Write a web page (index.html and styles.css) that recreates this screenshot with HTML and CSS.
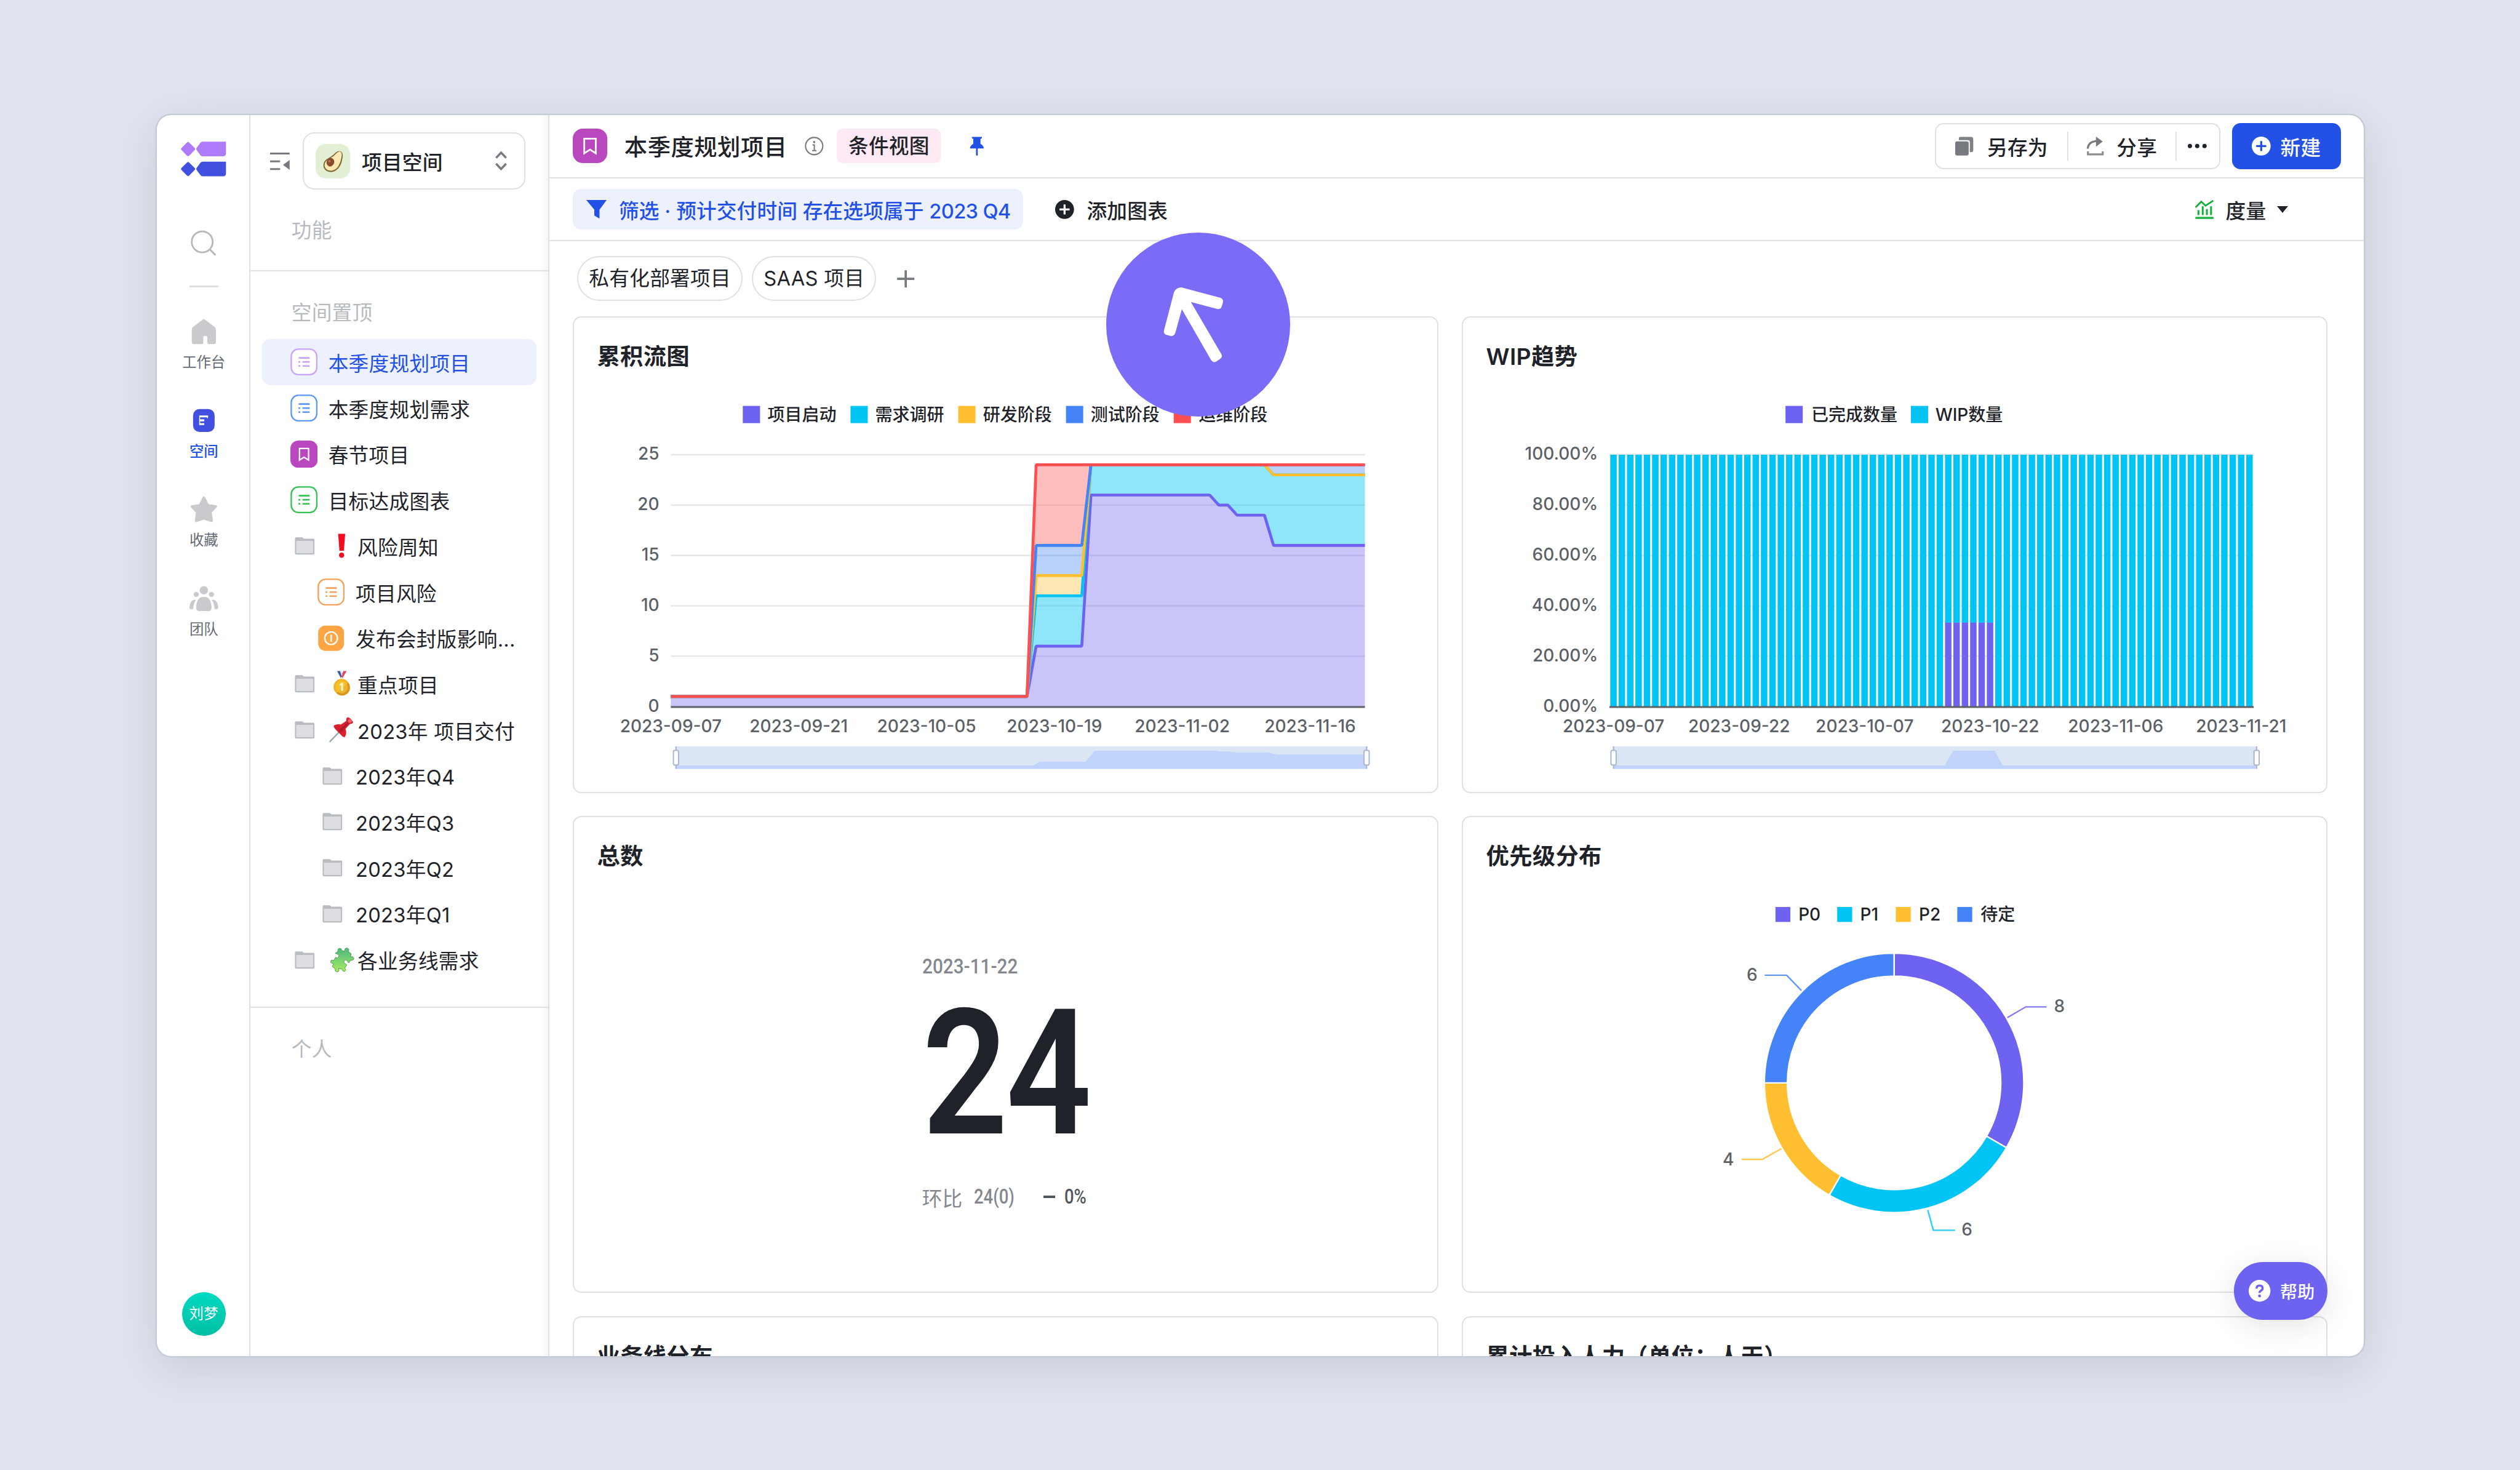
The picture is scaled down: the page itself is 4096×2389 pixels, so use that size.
FILE: index.html
```html
<!DOCTYPE html>
<html lang="zh-CN">
<head>
    <meta charset="UTF-8">
    <meta name="viewport" content="width=device-width, initial-scale=1.0">
    <title>本季度规划项目</title>
    <link rel="stylesheet" href="styles.css">
</head>
<body>
    <!-- 图标 -->
    <svg class="defs">
        <symbol id="i-list" viewBox="0 0 19 19">
            <rect x=".6" y=".6" width="17.8" height="17.8" rx="5" fill="#fff" stroke="currentColor" stroke-width="1"/>
            <path d="M5.8 6.7h7.6M8.4 9.5h5M8.4 12.3h5" stroke="currentColor" stroke-width="1.1"/>
            <path d="M5.6 9.5h1.3M5.6 12.3h1.3" stroke="currentColor" stroke-width="1.1"/>
        </symbol>
        <symbol id="i-folder" viewBox="0 0 15 13">
            <path d="M.6 1.2Q.6.5 1.3.5h4.3l1.2 1h6.6q.8 0 .8.8v9.4q0 .8-.8.8H1.4q-.8 0-.8-.8z" fill="#b9bdc2"/>
            <path d="M1.5 3h11.8v8.6H1.5z" fill="#dcdee2"/>
        </symbol>
        <symbol id="i-mark" viewBox="0 0 24 24">
            <rect width="24" height="24" rx="7" fill="#b947be"/>
            <path d="M8 7h8v10.2l-4-2.6-4 2.6z" fill="none" stroke="#fff" stroke-width="1.2"/>
        </symbol>
        <symbol id="i-plus" viewBox="0 0 14 14">
            <path fill-rule="evenodd" d="M7 .4a6.6 6.6 0 1 0 0 13.2A6.6 6.6 0 0 0 7 .4zM6.3 3.5h1.4v2.8h2.8v1.4H7.7v2.8H6.3V7.7H3.5V6.3h2.8z" fill="currentColor"/>
        </symbol>
    </svg>

    <div class="window">
        <nav class="rail">
            <svg class="logo" viewBox="0 0 32 24.4">
                <g>
                    <path d="M4.2.8q.8-.9 1.6 0l3.8 3.7q.7.7 0 1.400L5.900 9.700q-.9.900-1.800 0L.4 5.900q-.6-.7 0-1.400z"/>
                    <path d="M15.2.1H31.4v8.200q0 2-2 2H15.200q-1 0-1.600-.8l-2.600-3.500q-.6-.8 0-1.600L13.600.9q.6-.8 1.600-.8z"/>
                </g>
                <g fill="#4150de" transform="translate(0 13.9)">
                    <path d="M4.2.8q.8-.9 1.6 0l3.8 3.7q.7.7 0 1.400L5.900 9.700q-.9.900-1.800 0L.4 5.900q-.6-.7 0-1.400z"/>
                    <path d="M15.2.1H31.4v8.200q0 2-2 2H15.200q-1 0-1.600-.8l-2.600-3.500q-.6-.8 0-1.600L13.600.9q.6-.8 1.600-.8z"/>
                </g>
            </svg>
            <svg class="search" viewBox="0 0 18 18">
                <circle cx="8" cy="8.2" r="7.3" fill="none" stroke="#b4b8bd" stroke-width="1.2"/>
                <path d="M13.4 13.5l3.900 3.900" stroke="#b4b8bd" stroke-width="1.3"/>
            </svg>
            <div class="rail-line"></div>
            <a class="rail-item">
                <svg viewBox="0 0 20 20"><path d="M9 1.600q1-.8 2 0l6.600 5q.8.700.8 1.700v8.800q0 1.400-1.400 1.400h-3.600q-1 0-1-1v-3.600q0-1-1.100-1h-.6q-1.100 0-1.100 1v3.600q0 1-1 1H3q-1.400 0-1.400-1.400V8.300q0-1 .8-1.700z" fill="#c8cacd"/></svg>
                <span>工作台</span>
            </a>
            <a class="rail-item active">
                <svg viewBox="0 0 20 20">
                    <rect x="2.5" y="2" width="15" height="16" rx="4.5" fill="#4150de"/>
                    <path d="M6.8 7.2h6.200M6.8 9.9h3.500M6.8 12.5h3.500" stroke="#fff" stroke-width="1.3"/>
                    <path d="M7.1 7v6M12.5 7v1.400" stroke="#fff" stroke-width=".6"/>
                </svg>
                <span>空间</span>
            </a>
            <a class="rail-item">
                <svg viewBox="0 0 20 20"><path d="M9 1.600q1-1.600 2 0l2.300 4.600 5 .7q1.600.400.5 1.700l-3.300 3.400.8 5.200q0 1.900-1.700 1.200L10 16.900l-4.600 1.500q-1.700.700-1.700-1.200l.8-5.200-3.300-3.400q-1.100-1.300.5-1.700l5-.7z" fill="#c8cacd"/></svg>
                <span>收藏</span>
            </a>
            <a class="rail-item">
                <svg viewBox="0 0 20 20" fill="#c8cacd">
                    <circle cx="10" cy="4" r="2.9"/>
                    <circle cx="4.7" cy="6.9" r="1.8"/>
                    <circle cx="15.3" cy="6.9" r="1.8"/>
                    <path d="M4.700 16.200q0-7.600 5.300-7.600t5.300 7.600q0 2.200-1.800 2.200h-7q-1.800 0-1.800-2.200z"/>
                    <path d="M4.600 10.600q-1.900 2.500-2 6.300-2.600.7-2.600-.9.200-4.400 2.800-5.300zM15.400 10.600q1.900 2.500 2 6.300 2.600.7 2.600-.9-.2-4.400-2.800-5.300z"/>
                </svg>
                <span>团队</span>
            </a>
            <div class="avatar">刘梦</div>
        </nav>

        <aside class="sidebar">
            <div class="space-row">
                <svg class="fold" viewBox="0 0 14 13"><path d="M0 1.100h13.600M0 6.500h7M0 11.900h7" stroke="#777b80" stroke-width="1.3"/><path d="M13.600 5.600v6.800L9 9z" fill="#777b80"/></svg>
                <div class="space-select">
                    <div class="space-icon">
                        <svg viewBox="0 0 24 24">
                            <path d="M17.6 5.2c1.9 1.2 1.3 3.4.8 6-.7 3.9-3.2 7.6-6.7 8.2-3.6.6-6.8-1.9-6.2-5.3.5-3.4 4-4.2 6.6-6.4C14 6 15.7 4.1 17.6 5.2z" fill="#7a6432"/>
                            <path d="M17.3 5.5c1.4.9.9 3 .3 5.5-.9 3.7-3 7-6.2 7.5-3 .5-5.6-1.6-5.1-4.4.5-2.9 3.7-3.7 6.4-5.9 1.7-1.4 3.2-3.6 4.6-2.7z" fill="#fae9b2"/>
                            <path d="M6.3 14.8c.4 2.6 2.7 4.2 5.3 3.6 2.3-.5 4-2.7 5-5.3.1 3-3.1 5.6-5.8 5.5-2.5 0-4.4-1.6-4.5-3.8z" fill="#e9c66f"/>
                            <ellipse cx="10.3" cy="12.7" rx="2.6" ry="3" transform="rotate(25 10.3 12.7)" fill="#8a4b2c"/>
                            <circle cx="9.7" cy="12" r=".9" fill="#b8764f"/>
                        </svg>
                    </div>
                    <span>项目空间</span>
                    <svg class="updown" viewBox="0 0 9 14"><path d="M1 5l3.5-3.7L8 5M1 9l3.5 3.7L8 9" fill="none" stroke="#777b80" stroke-width="1.5"/></svg>
                </div>
            </div>
            <div class="group-title first">功能</div>
            <div class="group-title">空间置顶</div>
            <ul class="tree">
                <li class="selected"><svg class="ic" color="#c9a2fb"><use href="#i-list"/></svg>本季度规划项目</li>
                <li><svg class="ic" color="#5b98fb"><use href="#i-list"/></svg>本季度规划需求</li>
                <li><svg class="ic"><use href="#i-mark"/></svg>春节项目</li>
                <li><svg class="ic" color="#30c552"><use href="#i-list"/></svg>目标达成图表</li>
                <li><svg class="ic folder"><use href="#i-folder"/></svg><svg class="emoji" viewBox="0 0 18 18"><path d="M6.700.6h4.900l-.9 11.800H7.600z" fill="#f20d20"/><circle cx="9.1" cy="15.5" r="1.8" fill="#f20d20"/></svg>风险周知</li>
                <li class="sub"><svg class="ic" color="#f3a25a"><use href="#i-list"/></svg>项目风险</li>
                <li class="sub"><svg class="ic" viewBox="0 0 19 19"><rect x=".5" y=".7" width="18" height="17.6" rx="5" fill="#ffa544"/><circle cx="9.5" cy="9.5" r="4.4" fill="none" stroke="#fff"/><path d="M9.500 7v5" stroke="#fff" stroke-width="1.1"/></svg>发布会封版影响...</li>
                <li><svg class="ic folder"><use href="#i-folder"/></svg><svg class="emoji" viewBox="0 0 18 18">
                    <path d="M6 .2h2l1.500 3.500L8.500 5z" fill="#3c55a8"/><path d="M10.400.2h2.200L9.800 5 8.600 4z" fill="#e0485c"/><path d="M8 .2h.9l.8 2.600-.6.8z" fill="#d7dcea"/>
                    <circle cx="9.1" cy="11.3" r="5.600" fill="#f0b21f"/><path d="M13.800 8.400a5.500 5.500 0 0 1-8.300 7.200z" fill="#dc9620"/>
                    <circle cx="9.1" cy="11.3" r="4.4" fill="#f8c934" fill-opacity=".6"/><path d="M7.600 9.600l1.600-1.200h.9v5.600H8.800v-4.100l-1 .6z" fill="#fff6cf"/></svg>重点项目</li>
                <li><svg class="ic folder"><use href="#i-folder"/></svg><svg class="emoji" viewBox="0 0 18 18">
                    <path d="M.8 17.400l7-7.300" stroke="#9aa8b4" stroke-width="1"/>
                    <path d="M3.700 6q2.500-1.300 4.900-.6l3.800-2.600q-.5-2.300 1.200-2.500 1.500.3 3.300 3 .6 1.500-1.900 1.600l-3.200 3.500q1.200 3-.5 5.700-1.400.2-2.500-1.400L4.900 8.800Q3.300 7 3.700 6z" fill="#d8202f"/>
                    <path d="M7 9.400l6.200-5.600 1 .8-5.600 6.400z" fill="#8f1a25" fill-opacity=".55"/><circle cx="14.9" cy="2.8" r="1.3" fill="#f2606a"/></svg>2023年 项目交付</li>
                <li class="sub"><svg class="ic folder"><use href="#i-folder"/></svg>2023年Q4</li>
                <li class="sub"><svg class="ic folder"><use href="#i-folder"/></svg>2023年Q3</li>
                <li class="sub"><svg class="ic folder"><use href="#i-folder"/></svg>2023年Q2</li>
                <li class="sub"><svg class="ic folder"><use href="#i-folder"/></svg>2023年Q1</li>
                <li><svg class="ic folder"><use href="#i-folder"/></svg><svg class="emoji" viewBox="0 0 18 18">
                    <defs><linearGradient id="pz" x1="0" y1="0" x2="0" y2="1"><stop offset="0" stop-color="#4cb883"/><stop offset="1" stop-color="#a8ec62"/></linearGradient></defs>
                    <path d="M6.600 2.400q-.5-1.900 1.200-2 1.500 0 1.300 1.400l2.200.6q-.3-2.200 1.500-2.200 2 .2 1 2.400l2 1.500-.5 2.200q2-.6 2.300.9 0 1.800-2.400 1.400l-.9 1.800q-.9-.1-1.200-1.300-1.400-1.300-2.300 0-.6 1.400.9 2l1 .7-1.400 2.300q1.300 1.600 0 2.200-1.700.4-1.900-1.600l-2.600-.3q1 2-.4 2.200-2.200.2-1.700-2l-2-1.500.8-2.200q-2.200 0-2-1.500.4-1.400 2.200-.6l1.200-2.200q1.300 1 2.100-.2.600-1.500-1-2.100l-1.300-.5z" transform="translate(0 .6)" fill="url(#pz)" stroke="#4b9a3c" stroke-width=".4"/></svg>各业务线需求</li>
            </ul>
            <div class="group-title person">个人</div>
        </aside>

        <main class="main">
            <header class="topbar">
                <svg class="badge"><use href="#i-mark"/></svg>
                <h1>本季度规划项目</h1>
                <svg class="info" viewBox="0 0 14 14"><circle cx="7" cy="7" r="6" fill="none" stroke="#777b80" stroke-width=".9"/><circle cx="7" cy="4.2" r=".8" fill="#777b80"/><path d="M5.800 6.200H7.100v4M5.600 10.200h3" fill="none" stroke="#777b80" stroke-width=".9"/></svg>
                <span class="tag">条件视图</span>
                <svg class="pin" viewBox="0 0 11 14"><path d="M2 .6h7v.9L8 2v3.500q2.300 1.300 2.300 3.200H.7Q.7 6.800 3 5.500V2L2 1.500z" fill="#2351e6"/><path d="M5.500 8v5.600" stroke="#2351e6" stroke-width="1.2"/></svg>
                <div class="actions">
                    <div class="btn-group">
                        <a class="btn save"><svg viewBox="0 0 14 14"><path d="M3.800.6h7.700q1.500 0 1.500 1.500v7.600q0 1.500-1.500 1.500h-.9V4.300q0-1.400-1.400-1.400H3V1.400q0-.8.8-.8z" fill="#7e8287"/><rect x=".4" y="3.7" width="9.4" height="9.9" rx="1.3" fill="#777b80"/></svg>另存为</a>
                        <a class="btn share"><svg viewBox="0 0 14 14"><path d="M1.400 8.800q.6-5 6.600-5.300" fill="none" stroke="#777b80" stroke-width="1.4"/><path d="M7.200.4l4.700 3.500-4.700 3.600z" fill="#777b80"/><path d="M1.600 10.700v2.100h10.300v-2.100" fill="none" stroke="#8b8f93" stroke-width="1.4"/></svg>分享</a>
                        <a class="btn more"><svg viewBox="0 0 14 14" fill="#1f2329"><circle cx="1.9" cy="7" r="1.5"/><circle cx="7" cy="7" r="1.5"/><circle cx="12.1" cy="7" r="1.5"/></svg></a>
                    </div>
                    <a class="btn-new"><svg><use href="#i-plus"/></svg>新建</a>
                </div>
            </header>

            <div class="toolbar">
                <div class="filter"><svg viewBox="0 0 15 14"><path d="M.4.4h14.200L9.600 7.200v6.200L6 11.200v-4z" fill="#2351e6"/></svg><span>筛选 · 预计交付时间 存在选项属于 <span class="latin">2023 Q4</span></span></div>
                <div class="add-chart"><svg><use href="#i-plus"/></svg>添加图表</div>
                <div class="measure">
                    <svg viewBox="0 0 14 14" fill="none" stroke="#14b038"><path d="M.7 5.600l4-4 3 2.800L13 .9" stroke-width="1.2"/><path d="M2.700 10.900V7.500M5.700 10.900V4.800M8.600 10.900V6.700M11.500 10.900V4.800" stroke-width="1.3"/><path d="M.6 12.900h12.600" stroke-width="1.4"/></svg>
                    <span>度量</span><i class="caret"></i>
                </div>
            </div>

            <div class="content">
                <div class="chips">
                    <span class="chip">私有化部署项目</span>
                    <span class="chip">SAAS 项目</span>
                    <svg class="chip-add" viewBox="0 0 13 13"><path d="M6.500.5v12M.5 6.500h12" stroke="#777b80" stroke-width="1.6"/></svg>
                </div>
                <div class="cards">
                    <section class="card">
                        <h2>累积流图</h2>
                        <svg class="chart" id="flow" viewBox="290.5 196 600.5 275"></svg>
                    </section>
                    <section class="card">
                        <h2>WIP趋势</h2>
                        <svg class="chart" id="wip" viewBox="909.5 196 600.5 275"></svg>
                    </section>
                    <section class="card">
                        <h2>总数</h2>
                        <div class="total">
                            <div class="total-date">2023-11-22</div>
                            <div class="total-num">24</div>
                            <div class="total-cmp"><span class="cmp-label">环比</span><span class="din cmp-old">24(0)</span><i class="dash"></i><span class="din cmp-rate">0%</span></div>
                        </div>
                    </section>
                    <section class="card">
                        <h2>优先级分布</h2>
                        <svg class="chart" id="donut" viewBox="909.5 544 600.5 275"></svg>
                    </section>
                    <section class="card"><h2>业务线分布</h2></section>
                    <section class="card"><h2>累计投入人力（单位：人天）</h2></section>
                </div>
            </div>
        </main>

        <a class="help"><svg viewBox="0 0 16 16"><circle cx="8" cy="8" r="7.6" fill="#fff"/><path d="M5.900 6.500q0-2.100 2.100-2.100t2.100 1.900q0 1.100-1.200 1.700-.9.500-.9 1.500" fill="none" stroke="#6e62f0" stroke-width="1.5"/><circle cx="8" cy="11.6" r="1" fill="#6e62f0"/></svg>帮助</a>

        <div class="pointer">
            <svg viewBox="74 74 960 960"><path d="M466 360L668 414Q687 420 684 438L678 458Q672 478 652 472L516 436L675 708Q684 724 668 734L650 746Q633 756 622 740L469 474L436 594Q430 617 410 614L392 609Q371 604 376 584L428 386Q438 362 466 360Z" fill="#fff"/></svg>
        </div>
    </div>

    <script src="charts.js"></script>
</body>
</html>
```

FILE: styles.css
```css
* {
    box-sizing: border-box;
}
body {
    margin: 0;
    width: 1754.4px;
    height: 1023.2px;
    padding: 80.1px 109.4px 0;
    zoom: 2.3347;
    overflow: hidden;
    background-color: #e0e4ef;
    font-family: Inter, "Noto Sans CJK SC", sans-serif;
    font-size: 14px;
    letter-spacing: 0.12px;
    color: #1f2329;
}
h1, h2, ul {
    margin: 0;
    padding: 0;
}
h1 {
    font-weight: 500;
}
ul {
    list-style: none;
}
svg {
    display: block;
    flex: none;
}
.defs {
    position: absolute;
    width: 0;
    height: 0;
}
.window {
    position: relative;
    display: flex;
    width: 1536px;
    height: 864px;
    background-color: #fff;
    border-radius: 10px;
    overflow: hidden;
    box-shadow: 0 0 0 1px #c6cad6, 0 8px 32px rgba(31, 35, 60, 0.13);
}

/* 左侧导航 */
.rail {
    display: flex;
    flex-direction: column;
    align-items: center;
    width: 65px;
    padding: 18.4px 0 14.4px 0.8px;
    border-right: 1px solid #dee0e3;
}
.logo {
    width: 32px;
    height: 24.4px;
    fill: #ad7bfb;
}
.search {
    width: 18px;
    height: 18px;
    margin-top: 37.2px;
}
.rail-line {
    width: 20px;
    height: 1px;
    margin-top: 20.8px;
    background-color: #dee0e3;
}
.rail-item {
    display: flex;
    flex-direction: column;
    align-items: center;
    height: 62px;
    font-size: 10px;
    line-height: 14px;
    letter-spacing: 0;
    color: #646a73;
}
.rail-line + .rail-item {
    margin-top: 21px;
}
.rail-item svg {
    width: 20px;
    height: 20px;
    margin-bottom: 4.5px;
}
.rail-item.active {
    color: #2351e6;
    font-weight: 500;
}
.avatar {
    width: 30.4px;
    height: 30.4px;
    margin-top: auto;
    border-radius: 50%;
    background: linear-gradient(#00dac1, #00bfa4);
    color: #fff;
    font-size: 10px;
    line-height: 30px;
    text-align: center;
}

/* 空间目录 */
.sidebar {
    width: 208px;
    border-right: 1px solid #dee0e3;
    box-shadow: inset -6px 0 6px -5px rgba(31, 35, 41, 0.07);
}
.space-row {
    display: flex;
    align-items: center;
    height: 64px;
    padding-left: 13.5px;
}
.fold {
    width: 14px;
    height: 13px;
}
.space-select {
    display: flex;
    align-items: center;
    width: 155px;
    height: 40px;
    margin-left: 8.8px;
    padding: 0 11.5px 0 8px;
    border: 1px solid #dee0e3;
    border-radius: 8px;
    font-weight: 500;
}
.space-icon {
    width: 24px;
    height: 24px;
    margin-right: 8.3px;
    border-radius: 7px;
    background-color: #e3efd5;
}
.updown {
    width: 9px;
    height: 14px;
    margin-left: auto;
}
.group-title {
    height: 48px;
    padding-left: 28.5px;
    border-top: 1px solid #dee0e3;
    line-height: 58px;
    color: #b6babf;
}
.group-title.first {
    height: 44px;
    border-top: 0;
    line-height: 33px;
}
.tree {
    padding: 0 8px 16px;
    height: 464.8px;
}
.tree li {
    display: flex;
    align-items: center;
    height: 32px;
    padding-left: 19.7px;
    border-radius: 6px;
    white-space: nowrap;
}
.tree li.sub {
    padding-left: 38.7px;
}
.tree li.selected {
    background-color: #edf1fd;
    color: #2351e6;
}
.ic {
    width: 19px;
    height: 19px;
    margin-right: 7.5px;
}
.ic.folder {
    width: 15px;
    height: 13px;
    margin: 0 8.7px 0 2.8px;
}
.emoji {
    width: 18px;
    height: 18px;
    margin-right: 2.3px;
}

/* 主区域 */
.main {
    display: flex;
    flex-direction: column;
    flex: 1;
    min-width: 0;
}
.topbar,
.toolbar {
    display: flex;
    flex: none;
    align-items: center;
    height: 44px;
    padding: 0 15.5px 0 16.3px;
    border-bottom: 1px solid #dee0e3;
}
.badge {
    width: 24px;
    height: 24px;
}
.topbar h1 {
    margin-left: 12px;
    font-size: 16px;
    letter-spacing: 0.2px;
}
.info {
    width: 14px;
    height: 14px;
    margin: 0 8.8px 0 11.8px;
}
.tag {
    height: 24px;
    padding: 0 8px;
    border-radius: 4px;
    background-color: #fde9f4;
    line-height: 24px;
    font-weight: 500;
}
.pin {
    width: 11px;
    height: 14px;
    margin-left: 19.3px;
}
.actions {
    display: flex;
    gap: 8.3px;
    margin-left: auto;
}
.btn-group {
    display: flex;
    align-items: center;
    width: 198.6px;
    height: 32px;
    border: 1px solid #dee0e3;
    border-radius: 6px;
}
.btn {
    display: flex;
    align-items: center;
    height: 20px;
    font-weight: 500;
}
.btn svg {
    width: 14px;
    height: 14px;
}
.save {
    width: 91.5px;
    padding-left: 12.8px;
    gap: 8.8px;
}
.share {
    width: 75.2px;
    padding-left: 11.7px;
    gap: 7.6px;
    border-left: 1px solid #dee0e3;
}
.more {
    padding-left: 7.2px;
    border-left: 1px solid #dee0e3;
}
.btn-new {
    display: flex;
    align-items: center;
    gap: 6.2px;
    width: 76px;
    height: 32px;
    padding-left: 13.5px;
    border-radius: 6px;
    background-color: #2351e6;
    color: #fff;
    font-weight: 500;
}
.btn-new svg,
.add-chart svg {
    width: 14px;
    height: 14px;
}
.filter {
    display: flex;
    align-items: center;
    gap: 8.2px;
    width: 313.4px;
    height: 28px;
    padding-left: 9px;
    border-radius: 6px;
    background-color: #edf1fd;
    color: #2351e6;
    font-weight: 500;
    letter-spacing: 0.05px;
    white-space: nowrap;
}
.latin {
    letter-spacing: -0.3px;
}
.filter svg {
    width: 15px;
    height: 14px;
}
.add-chart {
    display: flex;
    align-items: center;
    gap: 8.5px;
    margin-left: 22px;
    font-weight: 500;
}
.measure {
    display: flex;
    align-items: center;
    gap: 7.5px;
    margin-left: auto;
    margin-right: 37px;
    font-weight: 500;
}
.measure svg {
    width: 14px;
    height: 14px;
}
.caret {
    border: 4px solid transparent;
    border-top: 5px solid #1f2329;
    border-bottom: 0;
}
.content {
    padding: 10.3px 24px 0 16.5px;
}
.chips {
    display: flex;
    align-items: center;
    height: 31.2px;
    margin: 0 0 10.5px 3px;
    gap: 6.5px;
}
.chip {
    height: 31.2px;
    padding: 0 7.3px;
    border: 1px solid #dee0e3;
    border-radius: 16px;
    line-height: 29.4px;
}
.chip-add {
    width: 13px;
    height: 13px;
    margin-left: 7.5px;
}
.cards {
    display: grid;
    grid-template-columns: 602.5px 602.5px;
    grid-auto-rows: 332px;
    gap: 16px 16.5px;
}
.card {
    border: 1px solid #dee0e3;
    border-radius: 6px;
}
.card h2 {
    height: 55px;
    padding-left: 15.9px;
    font-size: 16px;
    font-weight: 600;
    line-height: 55px;
}
.chart {
    width: 600.5px;
    height: 275px;
    letter-spacing: 0;
}
.chart text {
    font-size: 12px;
    font-weight: 500;
}
.axis {
    fill: #5c6168;
}
.legend {
    fill: #1f2329;
}

/* 总数卡片 */
.total {
    width: 120px;
    margin: 0 0 0 242.2px;
    padding-top: 39px;
    font-family: Roboto, "Noto Sans CJK SC", sans-serif;
    letter-spacing: 0;
    white-space: nowrap;
}
.total-date {
    height: 20px;
    line-height: 20px;
    color: #84888e;
    font-weight: 500;
    transform: scaleX(0.91);
    transform-origin: 0 0;
}
.total-num {
    height: 124px;
    line-height: 124px;
    margin-top: 2.8px;
    font-size: 122px;
    font-weight: 600;
    letter-spacing: -1.5px;
    transform: scaleX(0.855);
    transform-origin: 0 0;
}
.total-cmp {
    display: flex;
    align-items: center;
    height: 20px;
    margin-top: 13.4px;
    color: #84888e;
}
.din {
    font-weight: 500;
    transform: scaleX(0.84);
    transform-origin: 0 0;
}
.cmp-label {
    width: 36px;
}
.cmp-old {
    width: 48.5px;
}
.dash {
    width: 8px;
    height: 2px;
    margin-right: 6.5px;
    background-color: #51565d;
}
.cmp-rate {
    color: #51565d;
}

/* 悬浮元素 */
.help {
    position: absolute;
    right: 25px;
    bottom: 25.5px;
    display: flex;
    align-items: center;
    gap: 6.5px;
    width: 65px;
    height: 40px;
    padding-left: 9.5px;
    border-radius: 20px;
    background-color: #6e62f0;
    box-shadow: 0 4px 20px rgba(31, 35, 41, 0.12);
    color: #fff;
    font-size: 12px;
    font-weight: 500;
}
.help svg {
    width: 16px;
    height: 16px;
}
.pointer {
    position: absolute;
    left: 660.7px;
    top: 81.7px;
    width: 128px;
    height: 128px;
    border-radius: 50%;
    background-color: #7b6cf8;
}
```

FILE: charts.js
```js
var PURPLE = '#6e62f0', CYAN = '#00c4f4', YELLOW = '#ffbf31', BLUE = '#4483f8', RED = '#ff4f50';

function text(x, y, s, anchor, cls) {
    return '<text x="' + x + '" y="' + y + '" text-anchor="' + anchor + '" class="' + cls + '">' + s + '</text>';
}

function legend(items, y, size) {
    return items.map(function (it) {
        return '<rect x="' + it[0] + '" y="' + (y - size / 2) + '" width="' + size + '" height="' + size + '" fill="' + it[2] + '"/>' +
            text(it[1], y + 4.4, it[3], 'start', 'legend');
    }).join('');
}

function grid(x1, x2, labels) {
    var out = '';
    labels.forEach(function (s, i) {
        var y = 412 - i * 35.06;
        if (i > 0) out += '<path d="M' + x1 + ' ' + y + 'H' + x2 + '" stroke="#e4e6ea"/>';
        out += text(x1 - 8, y + 3.6, s, 'end', 'axis');
    });
    return out;
}

// 底部缩放条
function slider(x1, x2, shape) {
    var out = '<rect x="' + x1 + '" y="439.7" width="' + (x2 - x1) + '" height="15.6" fill="#dbe5f4"/>' +
        '<path d="' + shape + '" fill="#bfd3fb"/>';
    [x1, x2].forEach(function (x) {
        out += '<path d="M' + x + ' 439.7v15.6" stroke="#acb8d1"/>' +
            '<rect x="' + (x - 1.8) + '" y="442.5" width="3.6" height="10.2" rx="1" fill="#fff" stroke="#acb8d1" stroke-width=".9"/>';
    });
    return out;
}

// 累积流图
(function () {
    var x0 = 357.9, step = 6.358, unit = 7.012;
    function X(d) { return (x0 + d * step).toFixed(2); }
    function Y(v) { return (412 - v * unit).toFixed(2); }
    var tops = [
        [PURPLE, 0.37, [[0, 1], [39, 1], [40, 6], [45, 6], [46, 21], [59, 21], [60, 20], [61, 20], [62, 19], [65, 19], [66, 16], [76, 16]]],
        [CYAN, 0.44, [[0, 1], [39, 1], [40, 11], [45, 11], [46, 24], [65, 24], [66, 23], [76, 23]]],
        [YELLOW, 0.37, [[0, 1], [39, 1], [40, 13], [45, 13], [46, 24], [65, 24], [66, 23], [76, 23]]],
        [BLUE, 0.37, [[0, 1], [39, 1], [40, 16], [45, 16], [46, 24], [76, 24]]],
        [RED, 0.37, [[0, 1], [39, 1], [40, 24], [76, 24]]]
    ];
    var html = legend([[408, 425.2, PURPLE, '项目启动'], [483, 500.2, CYAN, '需求调研'], [558, 575.2, YELLOW, '研发阶段'],
        [633, 650.2, BLUE, '测试阶段'], [708, 725.4, RED, '运维阶段']], 208.7, 12);
    html += grid(357.9, 841.1, ['0', '5', '10', '15', '20', '25']);
    var below = [[0, 0], [76, 0]];
    tops.forEach(function (s) {
        var pts = s[2].concat(below.slice().reverse());
        html += '<polygon fill="' + s[0] + '" fill-opacity="' + s[1] + '" points="' + pts.map(function (p) { return X(p[0]) + ',' + Y(p[1]); }).join(' ') + '"/>';
        below = s[2];
    });
    tops.forEach(function (s) {
        html += '<polyline fill="none" stroke="' + s[0] + '" stroke-width="2" stroke-linejoin="bevel" points="' + s[2].map(function (p) { return X(p[0]) + ',' + Y(p[1]); }).join(' ') + '"/>';
    });
    html += '<path d="M357.9 412.3H841.1" stroke="#5c6168" stroke-width="1.2"/>';
    ['2023-09-07', '2023-09-21', '2023-10-05', '2023-10-19', '2023-11-02', '2023-11-16'].forEach(function (d, i) {
        html += text(X(i * 14), 429.7, d, 'middle', 'axis');
    });
    html += slider(361.5, 842.3, 'M361.5 455.3V453H610.5L614.5 450.4H646.5L653 442.7H737L740 443.2H745L752 444H774L780.5 445.4H842.3V455.3z');
    document.getElementById('flow').innerHTML = html;
})();

// WIP趋势
(function () {
    var x0 = 1011.4, step = 5.826, h = 175.3;
    var html = legend([[1134, 1151.9, PURPLE, '已完成数量'], [1221.3, 1238.3, CYAN, 'WIP数量']], 208.7, 12);
    html += grid(1011.4, 1460, ['0.00%', '20.00%', '40.00%', '60.00%', '80.00%', '100.00%']);
    for (var i = 0; i < 77; i++) {
        var x = (x0 + i * step + 0.6).toFixed(2);
        var done = i >= 40 && i <= 45 ? h / 3 : 0;
        html += '<rect x="' + x + '" y="' + (412 - h) + '" width="4.5" height="' + (h - done) + '" fill="' + CYAN + '"/>';
        if (done) html += '<rect x="' + x + '" y="' + (412 - done) + '" width="4.5" height="' + done + '" fill="' + PURPLE + '"/>';
    }
    html += '<path d="M1011.4 412.3H1460" stroke="#5c6168" stroke-width="1.2"/>';
    ['2023-09-07', '2023-09-22', '2023-10-07', '2023-10-22', '2023-11-06', '2023-11-21'].forEach(function (d, i) {
        html += text((x0 + step * (i * 15 + 0.5)).toFixed(2), 429.7, d, 'middle', 'axis');
    });
    html += slider(1014.3, 1462, 'M1014.3 455.3V453H1244.9L1250.5 442.7H1279.6L1285.3 453H1462V455.3z');
    document.getElementById('wip').innerHTML = html;
})();

// 优先级分布
(function () {
    var cx = 1209.6, cy = 673.7, R = 90.3, r = 74.3;
    function P(rad, deg) {
        var a = deg * Math.PI / 180;
        return (cx + rad * Math.sin(a)).toFixed(2) + ' ' + (cy - rad * Math.cos(a)).toFixed(2);
    }
    var html = legend([[1127, 1143, PURPLE, 'P0'], [1170, 1186, CYAN, 'P1'], [1210.8, 1226.9, YELLOW, 'P2'], [1253.6, 1269.8, BLUE, '待定']], 556.5, 10.4);
    [[0, 120, PURPLE], [120, 210, CYAN], [210, 270, YELLOW], [270, 360, BLUE]].forEach(function (s) {
        html += '<path d="M' + P(R, s[0]) + 'A' + R + ' ' + R + ' 0 0 1 ' + P(R, s[1]) + 'L' + P(r, s[1]) +
            'A' + r + ' ' + r + ' 0 0 0 ' + P(r, s[0]) + 'z" fill="' + s[2] + '" stroke="#fff" stroke-width="1"/>';
    });
    [['M1288.5 628.3L1301.3 620.8H1315.8', PURPLE, 1324.7, 620.5, '8'],
     ['M1233.1 762.3L1236.9 776.3H1252.1', CYAN, 1260.3, 776, '6'],
     ['M1131.1 719.5L1117.8 727H1103.4', YELLOW, 1094.2, 727, '4'],
     ['M1145.1 609.5L1134.8 598.8H1119.5', BLUE, 1110.7, 598.7, '6']].forEach(function (l) {
        html += '<path d="' + l[0] + '" fill="none" stroke="' + l[1] + '" stroke-opacity=".85"/>' + text(l[2], l[3] + 4, l[4], 'middle', 'axis');
    });
    document.getElementById('donut').innerHTML = html;
})();
```
